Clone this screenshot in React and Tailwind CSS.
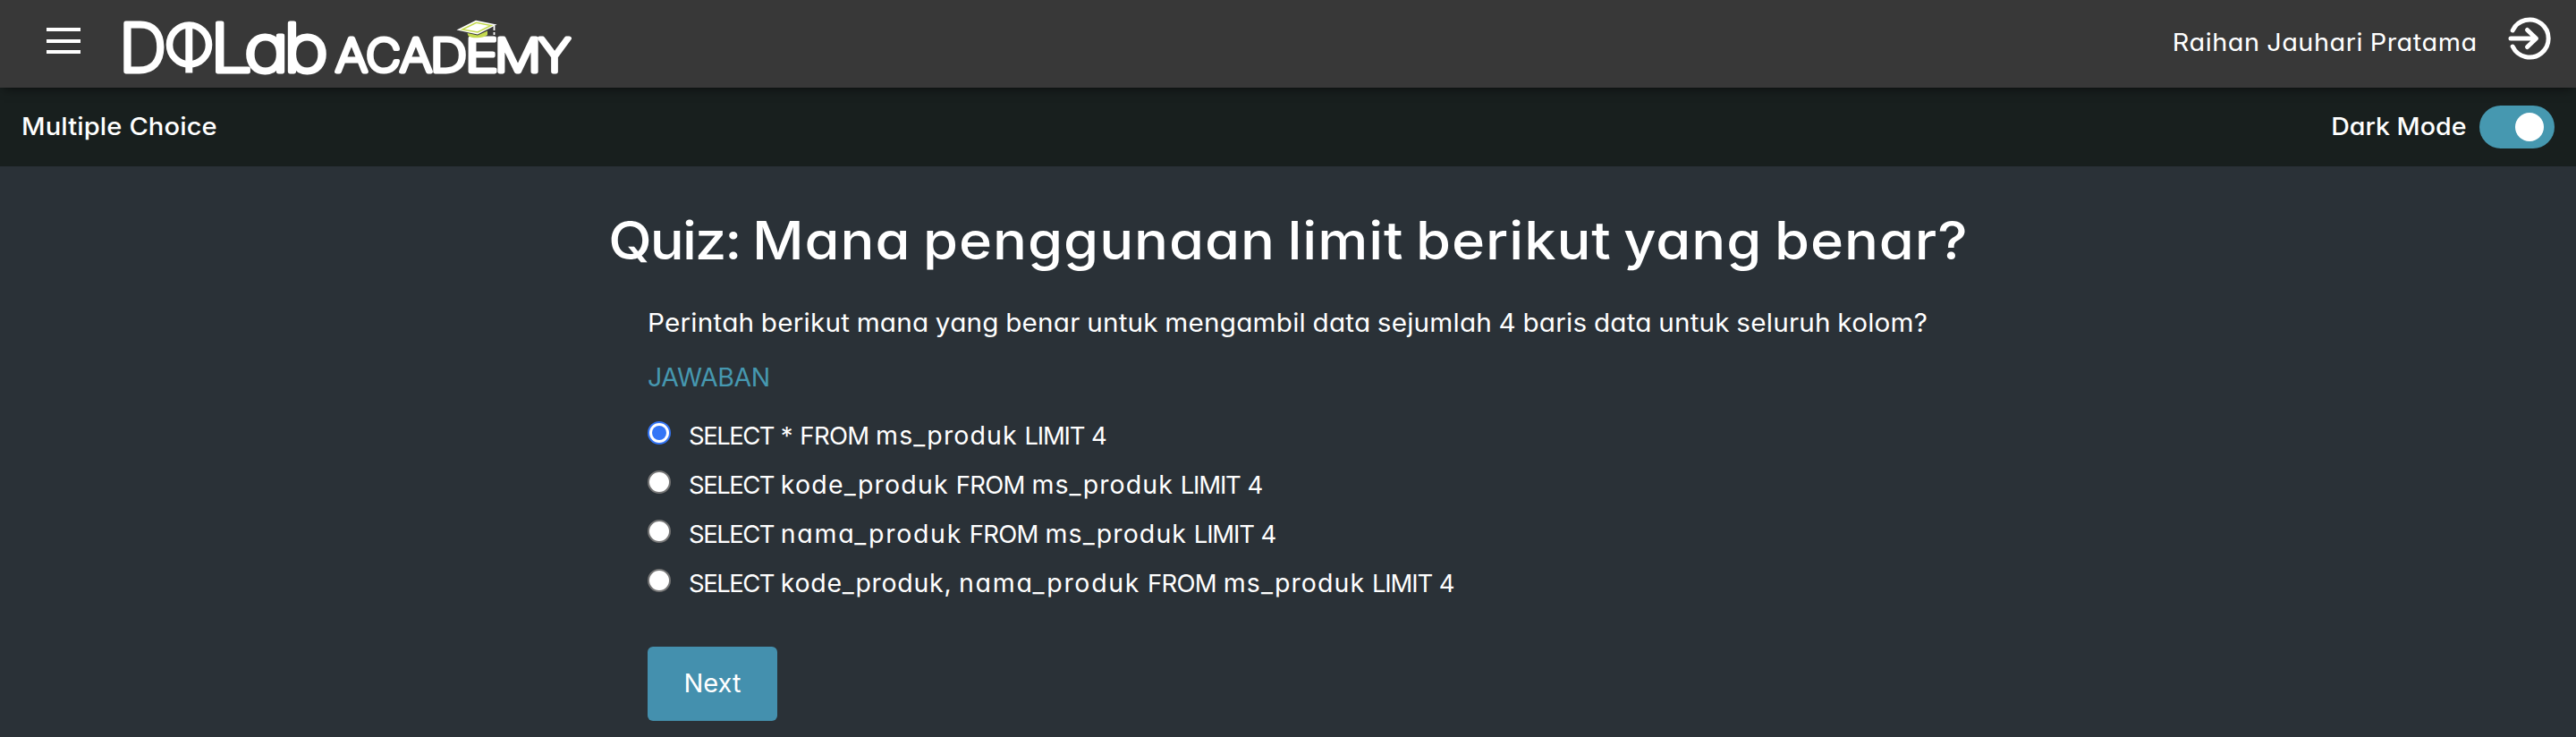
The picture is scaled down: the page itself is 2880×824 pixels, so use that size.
// Size and letter spacing for each word of an answer
const wordStyle = {
  SELECT: 'tracking-[-1.5px]',
  FROM: 'tracking-[-0.7px]',
  LIMIT: 'tracking-[-1.2px]',
  ms_produk: 'text-[28.5px] tracking-[1.1px]',
  kode_produk: 'text-[28.5px] tracking-[1.2px]',
  'kode_produk,': 'text-[28.5px] tracking-[0.7px]',
  nama_produk: 'text-[28.5px] tracking-[1.7px]',
};

const options = [
  'SELECT * FROM ms_produk LIMIT 4',
  'SELECT kode_produk FROM ms_produk LIMIT 4',
  'SELECT nama_produk FROM ms_produk LIMIT 4',
  'SELECT kode_produk, nama_produk FROM ms_produk LIMIT 4',
];

// Wordmark letters: character, left edge, advance width, font size
const letters = [
  ['D', 133, 53, 73.5],
  ['L', 235, 47, 73.5],
  ['a', 273, 50, 73.5],
  ['b', 317, 50, 73.5],
  ['A', 375, 36, 51],
  ['C', 409, 39, 51],
  ['A', 447, 36, 51],
  ['D', 481, 41, 51],
  ['E', 520, 37, 51],
  ['M', 553, 52, 51],
  ['Y', 602, 36, 51],
];

function Logo() {
  return (
    <svg viewBox="130 0 520 98" className="block h-[98px] w-[520px] shrink-0" fill="white">
      <g stroke="white" strokeLinejoin="round" strokeLinecap="round" strokeWidth="4.8" fontFamily="Inter, sans-serif" fontWeight="200" className="[font-feature-settings:'cv11']">
        {letters.map(([char, x, width, size], i) => (
          <text key={i} x={x} y="79.6" fontSize={size} textLength={width} lengthAdjust="spacingAndGlyphs">{char}</text>
        ))}
      </g>
      <circle cx="211.5" cy="50" r="22" fill="none" stroke="white" strokeWidth="7.6" />
      <rect x="207.3" y="28" width="8" height="53.5" />
      <path d="M510.5 33.5 L532 22.8 L555.5 27.5 L534 38.5 Z" />
      <path d="M517 33 L532.5 25.3 L549 28.5 L534 36 Z" fill="none" stroke="#c3d94e" strokeWidth="1.6" />
      <path d="M522.5 37 L534 39.5 L545 34.5 V39 Q540 42.5 533 42.3 Q526 42.3 523.5 40 Z" fill="#c3d94e" />
      <path d="M552.5 29 V34 M552.5 36 V39" stroke="white" strokeWidth="1.8" />
    </svg>
  );
}

function LogoutIcon() {
  return (
    <svg viewBox="0 0 48 48" className="size-12 shrink-0" fill="none" stroke="white" strokeWidth="5" strokeLinecap="round" strokeLinejoin="round">
      <path d="M5.2 15 A21 21 0 1 1 5.2 33" />
      <path d="M3 24 H31 M21.5 14.5 L31.5 24 L21.5 33.5" />
    </svg>
  );
}

export default function App() {
  return (
    <div className="flex h-[824px] w-full flex-col overflow-hidden bg-[#2a3137] font-['Inter',sans-serif] text-[27.5px] leading-10 whitespace-nowrap text-white [font-feature-settings:'cv11']">
      <header className="z-10 flex h-[98px] shrink-0 items-center justify-between bg-[#383838] pr-[28px] pl-[52px] shadow-[0_6px_10px_-4px_rgba(0,0,0,0.5)]">
        <div className="flex items-center">
          <button className="mb-[7px] flex w-[38px] flex-col gap-[8.5px]" aria-label="Menu">
            <span className="h-1 w-full bg-white" />
            <span className="h-1 w-full bg-white" />
            <span className="h-1 w-full bg-white" />
          </button>
          <div className="ml-10">
            <Logo />
          </div>
        </div>
        <div className="flex items-center gap-[34px]">
          <span className="mb-1 origin-right scale-x-105 tracking-[0.5px] [word-spacing:-1px]">Raihan Jauhari Pratama</span>
          <div className="mb-3">
            <LogoutIcon />
          </div>
        </div>
      </header>
      <div className="flex h-[88px] shrink-0 items-center justify-between bg-[#181f1e] pr-6 pl-6 font-medium">
        <span className="mb-0.5 origin-left scale-x-[1.06] tracking-[0.1px]">Multiple Choice</span>
        <div className="flex items-center gap-[15px]">
          <span className="mb-0.5 origin-right scale-x-[1.04]">Dark Mode</span>
          <button className="flex h-12 w-[84px] items-center justify-end rounded-full bg-[#4698b0] pr-3" aria-label="Toggle">
            <span className="size-8 rounded-full bg-white" />
          </button>
        </div>
      </div>
      <main className="flex flex-col items-center pt-[38px]">
        <h1 className="scale-x-[1.07] text-[59px] leading-[90px] font-medium tracking-[0.9px] [word-spacing:-4px]">
          <span className="tracking-[-1.8px]">Quiz:</span> Mana penggunaan limit berikut yang benar?
        </h1>
        <div className="mt-[27px] flex w-[1432px] flex-col items-start">
          <p className="origin-left scale-x-[1.06] text-[28px] tracking-[0.2px] [word-spacing:-1px]">Perintah berikut mana yang benar untuk mengambil data sejumlah 4 baris data untuk seluruh kolom?</p>
          <p className="mt-[21px] text-[28.5px] tracking-[-0.4px] text-[#4698b0]">JAWABAN</p>
          <div className="mt-[17px] flex flex-col">
            {options.map((option, i) => (
              <label key={option} className="flex h-[55px] items-center">
                {i === 0 ? (
                  <span className="mb-1.5 flex size-[26px] items-center justify-center rounded-full border-2 border-[#3375f6] bg-white">
                    <span className="size-4 rounded-full bg-[#3375f6]" />
                  </span>
                ) : (
                  <span className="mb-1.5 size-[26px] rounded-full border-2 border-[#767676] bg-white" />
                )}
                <span className="ml-5">
                  {option.split(' ').map((word, j) => (
                    <span key={j}>
                      {j > 0 && ' '}
                      <span className={wordStyle[word]}>{word}</span>
                    </span>
                  ))}
                </span>
              </label>
            ))}
          </div>
          <button className="mt-11 flex h-[83px] w-[145px] items-center justify-center rounded-md bg-[#4490ae] pb-0.5 text-[29px]">Next</button>
        </div>
      </main>
    </div>
  );
}
